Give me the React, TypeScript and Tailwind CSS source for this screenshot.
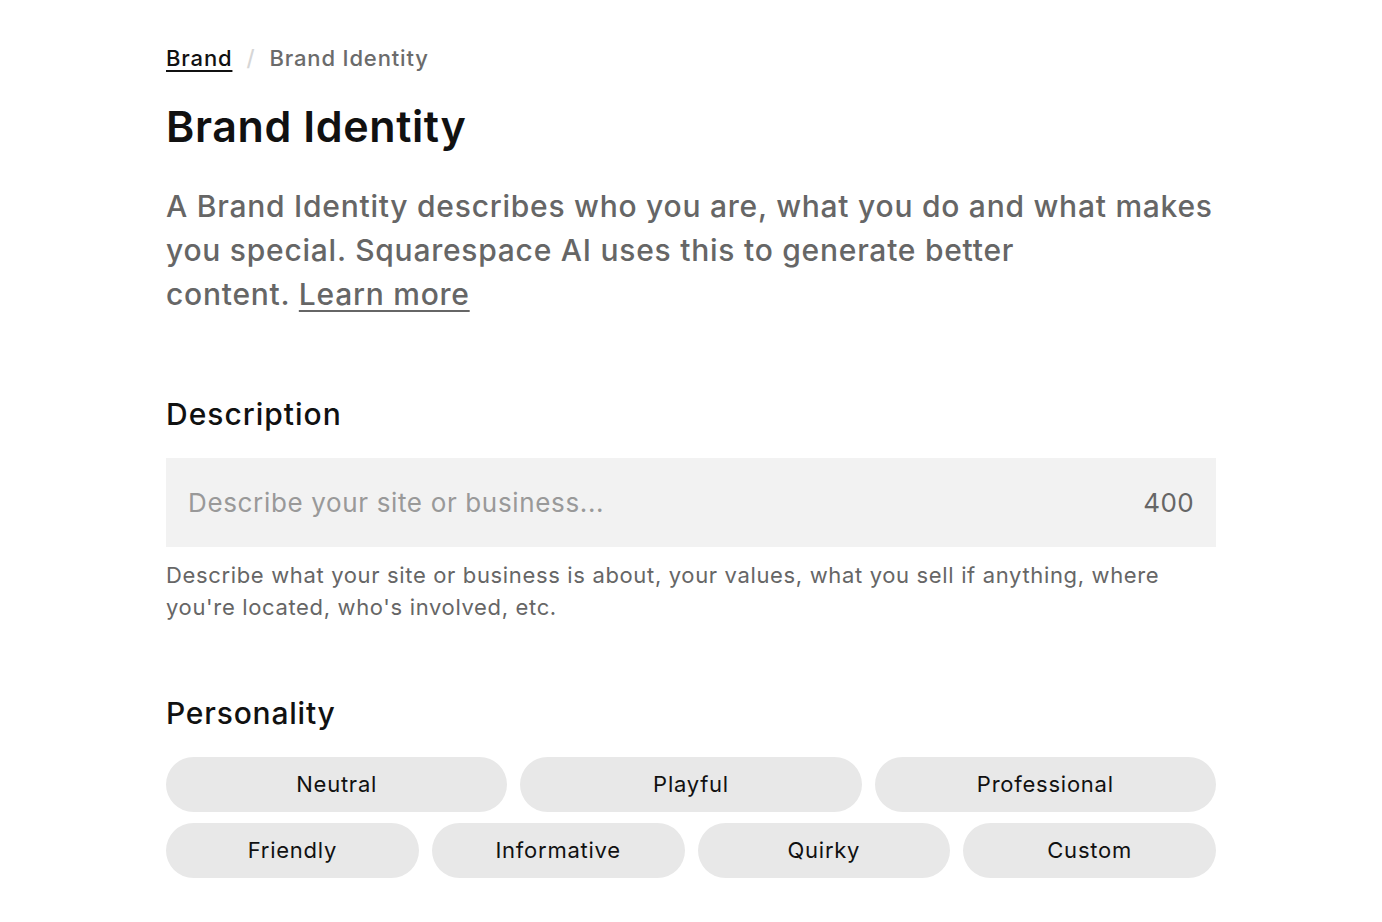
import { useState } from 'react'

const personalities = [
  ['Neutral', 'Playful', 'Professional'],
  ['Friendly', 'Informative', 'Quirky', 'Custom'],
]

export default function App() {
  const [description, setDescription] = useState('')
  const [selected, setSelected] = useState<string | null>(null)

  return (
    <div className="min-h-screen bg-white font-['Inter',sans-serif] text-[#111]">
      <div className="ml-[166px] w-[1050px] pt-[42px]">
        {/* Breadcrumb */}
        <nav className="flex items-center gap-[14px] text-[22px] font-medium leading-[32px] tracking-[0.85px]">
          <a href="#" className="text-[#111] underline underline-offset-[4px] decoration-[2px]">Brand</a>
          <span className="text-[#d6d6d6]">/</span>
          <span className="text-[#6b6b6b]">Brand Identity</span>
        </nav>

        <h1 className="mt-[26px] text-[43px] font-semibold leading-[52px] tracking-[0.6px]">
          Brand Identity
        </h1>

        <p className="mt-[32px] text-[30px] font-medium leading-[44px] tracking-[0.75px] text-[#666]">
          A Brand Identity describes who you are, what you do and what makes you special. Squarespace AI uses this to generate better
          <br />
          content.{' '}
          <a href="#" className="underline underline-offset-[5px] decoration-[2px]">Learn more</a>
        </p>

        {/* Description */}
        <section className="mt-[78px]">
          <h2 className="text-[30px] font-medium leading-[40px] tracking-[1px]">Description</h2>
          <div className="mt-[24px] flex h-[89px] items-center bg-[#f2f2f2] pl-[22px] pr-[22px]">
            <input
              value={description}
              maxLength={400}
              onChange={(e) => setDescription(e.target.value)}
              placeholder="Describe your site or business..."
              className="flex-1 bg-transparent text-[26px] tracking-[0.65px] text-[#333] outline-none placeholder:text-[#999]"
            />
            <span className="text-[26px] tracking-[0.4px] text-[#666]">{400 - description.length}</span>
          </div>
          <p className="mt-[12px] text-[22px] leading-[32px] tracking-[0.65px] text-[#666]">
            Describe what your site or business is about, your values, what you sell if anything, where you're located, who's involved, etc.
          </p>
        </section>

        {/* Personality */}
        <section className="mt-[70px]">
          <h2 className="text-[30px] font-medium leading-[40px] tracking-[0.8px]">Personality</h2>
          <div className="mt-[24px] flex flex-col gap-[11px]">
            {personalities.map((row, i) => (
              <div key={i} className="flex gap-[13px]">
                {row.map((p) => (
                  <button
                    key={p}
                    onClick={() => setSelected(p)}
                    className={`flex h-[55px] flex-1 items-center justify-center rounded-full text-[22px] tracking-[0.75px] ${
                      selected === p ? 'bg-[#111] text-white' : 'bg-[#e8e8e8] text-[#111]'
                    }`}
                  >
                    {p}
                  </button>
                ))}
              </div>
            ))}
          </div>
        </section>
      </div>
    </div>
  )
}
